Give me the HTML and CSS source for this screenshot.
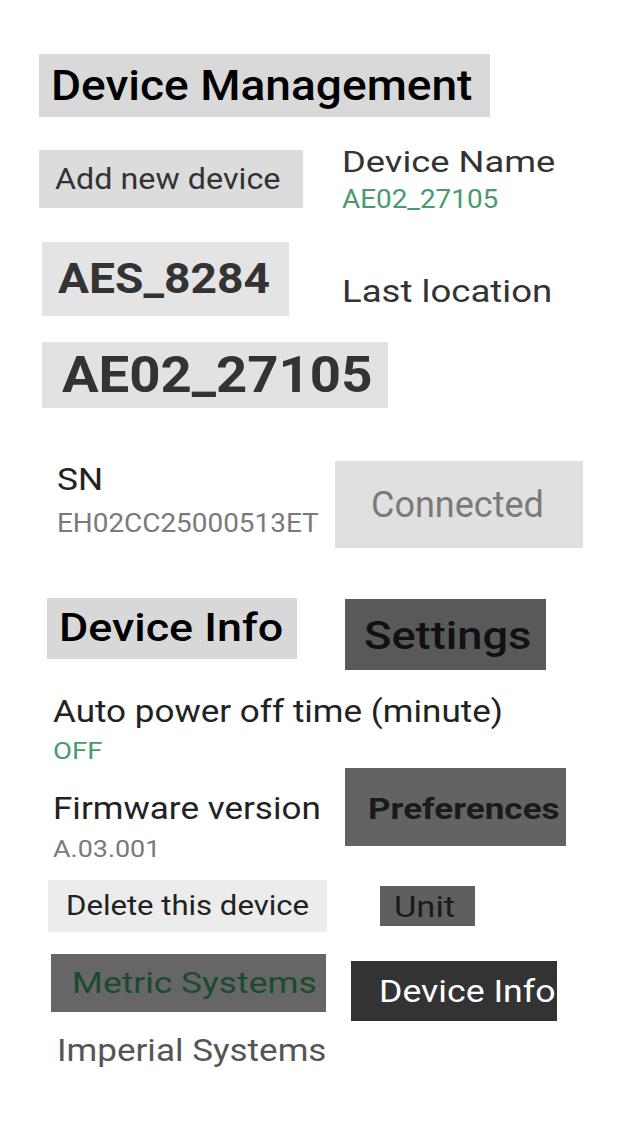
FILE: index.html
```html
<!DOCTYPE html>
<html>
<head>
<meta charset="utf-8">
<link rel="stylesheet" href="styles.css">
</head>
<body>
<div class="page">
  <div class="row r-title">
    <div class="box title"><span class="t">Device Management</span></div>
  </div>

  <div class="row r-add">
    <div class="box add"><span class="t">Add new device</span></div>
    <div class="group dn">
      <div class="label"><span class="t">Device Name</span></div>
      <div class="value green"><span class="t">AE02_27105</span></div>
    </div>
  </div>

  <div class="row r-aes">
    <div class="box aes"><span class="t">AES_8284</span></div>
    <div class="label last"><span class="t">Last location</span></div>
  </div>

  <div class="row r-ae02">
    <div class="box ae02"><span class="t">AE02_27105</span></div>
  </div>

  <div class="row r-sn">
    <div class="group sn">
      <div class="label sn-l"><span class="t">SN</span></div>
      <div class="value gray"><span class="t">EH02CC25000513ET</span></div>
    </div>
    <div class="box connected"><span class="t">Connected</span></div>
  </div>

  <div class="row r-info">
    <div class="box info"><span class="t">Device Info</span></div>
    <div class="box settings"><span class="t">Settings</span></div>
  </div>

  <div class="row r-auto">
    <div class="group auto">
      <div class="label dark"><span class="t">Auto power off time (minute)</span></div>
      <div class="value green off"><span class="t">OFF</span></div>
    </div>
  </div>

  <div class="row r-fw">
    <div class="group fw">
      <div class="label dark"><span class="t">Firmware version</span></div>
      <div class="value gray fwv"><span class="t">A.03.001</span></div>
    </div>
    <div class="box prefs"><span class="t">Preferences</span></div>
  </div>

  <div class="row r-del">
    <div class="box del"><span class="t">Delete this device</span></div>
    <div class="box unit"><span class="t">Unit</span></div>
  </div>

  <div class="row r-metric">
    <div class="box metric"><span class="t">Metric Systems</span></div>
    <div class="box info-dark"><span class="t">Device Info</span></div>
  </div>

  <div class="row r-imp">
    <div class="label imperial"><span class="t">Imperial Systems</span></div>
  </div>
</div>
</body>
</html>
```

FILE: styles.css
```css
html, body {
  margin: 0;
  padding: 0;
  background: #ffffff;
}

body {
  font-family: Roboto, "Noto Sans", "Liberation Sans", sans-serif;
  color: #333;
}

.page {
  display: flex;
  flex-direction: column;
  padding-top: 54px;
  width: 640px;
  min-height: 1138px;
  box-sizing: border-box;
}

.row {
  display: flex;
  align-items: flex-start;
}

.box {
  display: flex;
  align-items: center;
  box-sizing: border-box;
  white-space: nowrap;
  overflow: hidden;
}

.group {
  display: flex;
  flex-direction: column;
}

.label {
  font-size: 30px;
  line-height: 30px;
  color: #333;
  white-space: nowrap;
}

.value {
  white-space: nowrap;
}

/* the screenshot's text is drawn slightly wider than Roboto's natural width */
.t {
  display: inline-block;
  transform-origin: left center;
  transform: scaleX(var(--sx, 1));
}

.green { color: #4a9a70; }
.gray { color: #7a7a7a; }
.dark { color: #222; }

/* Row 1 */
.title {
  margin-left: 39px;
  width: 451px;
  height: 63px;
  padding-left: 12px;
  background: #d9d9d9;
  color: #000;
  font-size: 42px;
  line-height: 42px;
  font-weight: 500;
  --sx: 1.097;
}

/* Row 2 */
.r-add { margin-top: 28px; }
.add {
  margin-top: 5px;
  margin-left: 39px;
  width: 264px;
  height: 58px;
  padding-left: 16px;
  background: #dcdcdc;
  font-size: 29px;
  line-height: 29px;
  color: #333;
  --sx: 1.114;
}
.dn {
  margin-left: 39px;
  margin-top: 2px;
}
.dn .label { --sx: 1.21; }
.dn .value {
  margin-top: 10px;
  font-size: 25px;
  line-height: 25px;
  --sx: 1.115;
}

/* Row 3 */
.r-aes { margin-top: 30px; }
.aes {
  margin-left: 42px;
  width: 247px;
  height: 74px;
  padding-left: 16px;
  background: #e4e4e4;
  font-size: 42px;
  line-height: 42px;
  font-weight: 700;
  color: #333;
  --sx: 1.10;
}
.last {
  margin-left: 53px;
  margin-top: 34px;
  font-size: 31px;
  line-height: 31px;
  --sx: 1.18;
}

/* Row 4 */
.r-ae02 { margin-top: 26px; }
.ae02 {
  margin-left: 42px;
  width: 346px;
  height: 66px;
  padding-left: 20px;
  background: #e2e2e2;
  font-size: 50px;
  line-height: 50px;
  font-weight: 700;
  color: #333;
  --sx: 1.09;
}

/* Row 5 */
.r-sn { margin-top: 53px; }
.sn {
  margin-left: 57px;
  width: 278px;
  margin-top: 2px;
}
.sn-l {
  font-size: 32px;
  line-height: 32px;
  color: #222;
  --sx: 1.1;
}
.sn .value {
  margin-top: 16px;
  font-size: 25px;
  line-height: 25px;
  --sx: 1.116;
}
.connected {
  width: 248px;
  height: 87px;
  padding-left: 36px;
  background: #e0e0e0;
  color: #7a7a7a;
  font-size: 36px;
  line-height: 36px;
}

/* Row 6 */
.r-info { margin-top: 50px; }
.info {
  margin-left: 47px;
  width: 250px;
  height: 61px;
  padding-left: 12px;
  background: #d8d8d8;
  color: #000;
  font-size: 39px;
  line-height: 39px;
  font-weight: 500;
  --sx: 1.15;
}
.settings {
  margin-left: 48px;
  margin-top: 1px;
  width: 201px;
  height: 71px;
  padding-left: 19px;
  padding-top: 3px;
  background: #595959;
  color: #111;
  font-size: 38px;
  line-height: 38px;
  font-weight: 500;
  --sx: 1.19;
}

/* Row 7 */
.r-auto { margin-top: 26px; }
.auto { margin-left: 53px; }
.auto .label {
  font-size: 31px;
  line-height: 31px;
  --sx: 1.13;
}
.off {
  margin-top: 13px;
  font-size: 23px;
  line-height: 23px;
  --sx: 1.2;
}

/* Row 8 */
.r-fw { margin-top: 5px; }
.fw {
  margin-left: 53px;
  width: 292px;
  margin-top: 25px;
}
.fw .label {
  font-size: 31px;
  line-height: 31px;
  --sx: 1.13;
}
.fwv {
  margin-top: 14px;
  font-size: 23px;
  line-height: 23px;
  --sx: 1.17;
}
.prefs {
  width: 221px;
  height: 78px;
  padding-left: 23px;
  padding-top: 3px;
  background: #636363;
  color: #1a1a1a;
  font-size: 30px;
  line-height: 30px;
  font-weight: 700;
  --sx: 1.17;
}

/* Row 9 */
.r-del { margin-top: 19px; }
.del {
  margin-left: 48px;
  width: 279px;
  height: 52px;
  padding-left: 18px;
  background: #ececec;
  color: #222;
  font-size: 28px;
  line-height: 28px;
  --sx: 1.11;
}
.unit {
  margin-left: 53px;
  margin-top: 6px;
  width: 95px;
  height: 40px;
  padding-left: 14px;
  padding-top: 2px;
  background: #5f5f5f;
  color: #1a1a1a;
  font-size: 30px;
  line-height: 30px;
  --sx: 1.15;
}

/* Row 10 */
.r-metric { margin-top: 22px; }
.metric {
  margin-left: 51px;
  width: 275px;
  height: 58px;
  padding-left: 21px;
  background: #666666;
  color: #1c4a2e;
  font-size: 29px;
  line-height: 29px;
  --sx: 1.22;
}
.info-dark {
  margin-left: 25px;
  margin-top: 7px;
  width: 206px;
  height: 60px;
  padding-left: 28px;
  background: #333333;
  color: #ffffff;
  font-size: 31px;
  line-height: 31px;
  --sx: 1.15;
}

/* Row 11 */
.r-imp { margin-top: 14px; }
.imperial {
  margin-left: 57px;
  font-size: 31px;
  line-height: 31px;
  color: #555;
  --sx: 1.13;
}
```
